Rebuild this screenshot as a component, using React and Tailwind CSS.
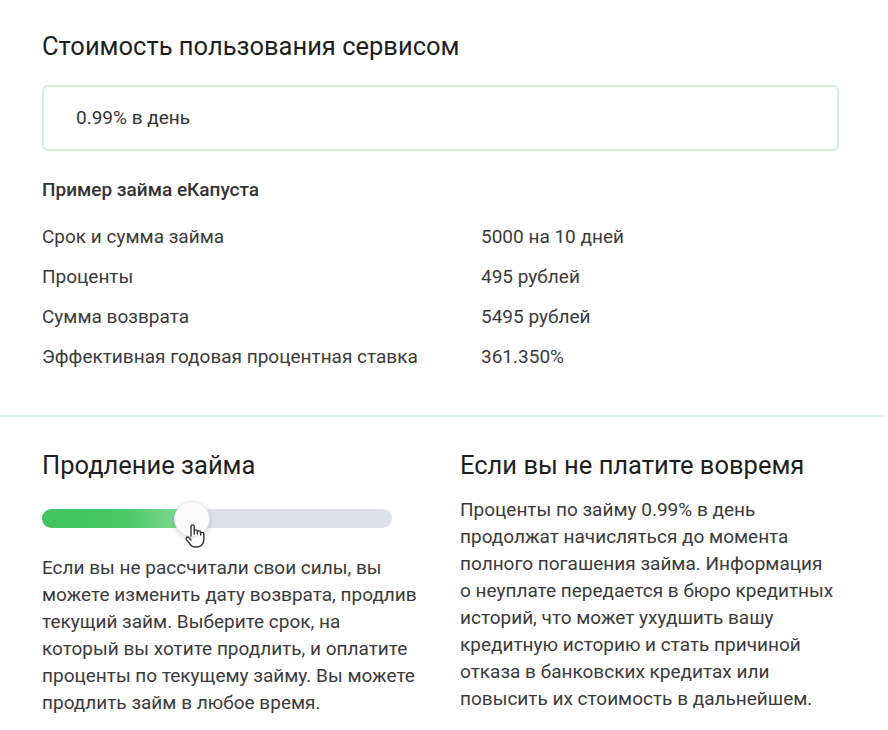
import React from "react";

const rows = [
  ["Срок и сумма займа", "5000 на 10 дней"],
  ["Проценты", "495 рублей"],
  ["Сумма возврата", "5495 рублей"],
  ["Эффективная годовая процентная ставка", "361.350%"],
];

function Hand() {
  return (
    <svg width="24" height="28" viewBox="0 0 24 28" className="absolute left-[142px] top-[21px]">
      <path
        d="M7 14V4.5a1.6 1.6 0 0 1 3.2 0V12m0-2.5a1.6 1.6 0 0 1 3.2 0V12m0-1.5a1.6 1.6 0 0 1 3.2 0V13m0-1a1.6 1.6 0 0 1 3.2 0v5.5c0 4-2.6 7.5-6.8 7.5h-1.6c-2.6 0-4.2-1.2-5.6-3.2L2.4 17.6a1.6 1.6 0 0 1 2.6-1.9L7 18"
        fill="#fff"
        stroke="#333"
        strokeWidth="1.4"
        strokeLinecap="round"
        strokeLinejoin="round"
      />
    </svg>
  );
}

export default function App() {
  return (
    <div className="w-[888px] h-[730px] bg-white overflow-hidden font-['Roboto',sans-serif] text-[#2b2b2b]">
      <div className="pt-[30px] px-[42px] w-[797px] box-content">
        <h2 className="text-[25.5px] leading-[32px] text-[#1e1e1e]">Стоимость пользования сервисом</h2>
        <div className="mt-[23px] h-[66px] rounded-[6px] border-2 border-[#d5eedc] flex items-center pl-[32px] text-[19px] text-[#333]">
          0.99% в день
        </div>
        <div className="mt-[27px] text-[19px] leading-[24px] font-medium text-[#333]">Пример займа еКапуста</div>
        <div className="mt-[15px]">
          {rows.map(([a, b]) => (
            <div key={a} className="flex h-[40px] items-center text-[19px] text-[#3a3a3a]">
              <div className="w-[439px]">{a}</div>
              <div>{b}</div>
            </div>
          ))}
        </div>
      </div>
      <div className="mt-[38px] h-[2px] w-[884px] bg-[#dcf1e2]" />
      <div className="flex px-[42px] pt-[32px]">
        <div className="w-[418px] shrink-0">
          <h2 className="text-[25.5px] leading-[32px] text-[#1e1e1e]">Продление займа</h2>
          <div className="relative mt-[20px] h-[36px] w-[350px]">
            <div className="absolute left-0 right-0 top-[8px] h-[19px] rounded-full bg-[#dde1e5] overflow-hidden">
              <div className="h-full w-[150px] bg-[linear-gradient(90deg,#3fc55f_0%,#47c965_55%,#8ddc9c_100%)]" />
            </div>
            <div className="absolute left-[132px] top-0 h-[36px] w-[36px] rounded-full bg-[#fafafa] border border-[#e3e5e7] shadow-[0_2px_5px_rgba(0,0,0,0.15)]" />
            <Hand />
          </div>
          <p className="mt-[17px] text-[19px] leading-[27px] text-[#3a3a3a]">
            Если вы не рассчитали свои силы, вы<br />
            можете изменить дату возврата, продлив<br />
            текущий займ. Выберите срок, на<br />
            который вы хотите продлить, и оплатите<br />
            проценты по текущему займу. Вы можете<br />
            продлить займ в любое время.
          </p>
        </div>
        <div className="w-[400px] shrink-0">
          <h2 className="text-[25.5px] leading-[32px] text-[#1e1e1e]">Если вы не платите вовремя</h2>
          <p className="mt-[15px] text-[19px] leading-[27px] text-[#3a3a3a]">
            Проценты по займу 0.99% в день<br />
            продолжат начисляться до момента<br />
            полного погашения займа. Информация<br />
            о неуплате передается в бюро кредитных<br />
            историй, что может ухудшить вашу<br />
            кредитную историю и стать причиной<br />
            отказа в банковских кредитах или<br />
            повысить их стоимость в дальнейшем.
          </p>
        </div>
      </div>
    </div>
  );
}
